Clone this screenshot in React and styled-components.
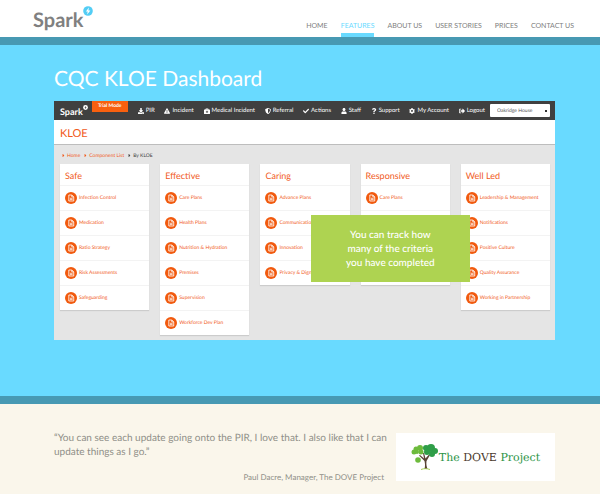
import React from 'react';
import styled, { createGlobalStyle } from 'styled-components';
import {
  FaBriefcaseMedical, FaCheck, FaCog, FaExclamationTriangle, FaDownload,
  FaQuestion, FaShieldAlt, FaSignOutAlt, FaUser, FaCaretRight,
} from 'react-icons/fa';

const Global = createGlobalStyle`
  * { box-sizing: border-box; }
  body { margin: 0; background: #faf6eb; font-family: Lato, "Liberation Sans", sans-serif; text-rendering: geometricPrecision; }
  h1, h2, h3, p, ul, ol, blockquote, figure { margin: 0; padding: 0; }
  ul, ol { list-style: none; }
  a { color: inherit; text-decoration: none; }
`;

const Header = styled.header`
  display: flex;
  justify-content: space-between;
  height: 37px;
  padding: 0 26px 0 33px;
  background: #fff;
`;

const Brand = styled.a`
  display: flex;
  align-items: flex-start;
  padding-top: ${(p) => (p.$small ? 4 : 6)}px;
  color: ${(p) => (p.$small ? '#fff' : '#808080')};
  font-size: ${(p) => (p.$small ? 9 : 20)}px;
  line-height: ${(p) => (p.$small ? 14 : 28)}px;
  font-weight: 700;
`;

const Bolt = styled.svg`
  width: ${(p) => (p.$small ? 5 : 10)}px;
  height: ${(p) => (p.$small ? 5 : 10)}px;
  flex: none;
`;

const MainNav = styled.nav`
  display: flex;
  align-items: flex-end;
  gap: 13px;
`;

const MainLink = styled.a`
  height: 17px;
  font-size: 7px;
  line-height: 13px;
  white-space: nowrap;
  color: ${(p) => (p.$active ? '#69daff' : '#808080')};
  border-bottom: 4px solid ${(p) => (p.$active ? '#69daff' : 'transparent')};
`;

const Hero = styled.main`
  min-height: 367px;
  padding: 20px 45px 56px 54px;
  background: #69daff;
  border: solid #4799b3;
  border-width: 8px 0;
`;

const Title = styled.h1`
  color: #fff;
  font-size: 21px;
  line-height: 28px;
  font-weight: 400;
  margin-bottom: 8px;
`;

const Dashboard = styled.section`
  position: relative;
  min-height: 239px;
  background: #e5e5e5;
`;

const Toolbar = styled.div`
  display: flex;
  align-items: flex-start;
  height: 19px;
  padding: 0 5px 0 6px;
  background: #404040;
  color: #fff;
`;

const Trial = styled.span`
  width: 36px;
  height: 11px;
  margin-left: 4px;
  background: #f8600f;
  font-size: 5px;
  line-height: 11px;
  font-weight: 700;
  text-align: center;
`;

const ToolNav = styled.nav`
  display: flex;
  flex: 1;
  justify-content: space-between;
  padding: 0 5px 0 10px;
`;

const ToolLink = styled.a`
  display: flex;
  align-items: center;
  gap: 2px;
  height: 19px;
  font-size: 6px;
  white-space: nowrap;
  svg { width: 6px; height: 6px; }
`;

const House = styled.select`
  width: 60px;
  height: 13px;
  margin-top: 3px;
  padding: 0 7px;
  appearance: none;
  border: 0;
  border-radius: 1px;
  color: #555;
  font: 5px Lato, sans-serif;
  text-rendering: geometricPrecision;
  background: linear-gradient(#333, #333) right 3px center / 2px 2px no-repeat #fff;
`;

const Heading = styled.h2`
  height: 25px;
  padding-left: 6px;
  background: #fff;
  border-bottom: 1px solid #bdbdbd;
  color: #f15a1c;
  font-size: 11px;
  line-height: 28px;
  font-weight: 400;
`;

const Crumbs = styled.ol`
  display: flex;
  align-items: center;
  gap: 4px;
  height: 19px;
  padding: 2px 8px 0;
  font-size: 5px;
`;

const Crumb = styled.li`
  display: flex;
  align-items: center;
  gap: 2px;
  color: ${(p) => (p.$current ? '#444' : '#f15a1c')};
  svg { width: 3px; height: 5px; }
`;

const Cards = styled.div`
  display: grid;
  grid-template-columns: repeat(5, minmax(0, 1fr));
  align-items: start;
  gap: 11px;
  padding: 0 5px 5px 6px;
`;

const Card = styled.section`
  min-height: 121px;
  background: #fff;
  box-shadow: 0 1px 1px #ccc;
`;

const CardTitle = styled.h3`
  height: 21px;
  padding-left: 5px;
  color: #f15a1c;
  font-size: 9px;
  line-height: 24px;
  font-weight: 400;
`;

const Item = styled.li`
  border-top: 1px solid #f3f3f3;
  &:last-child { border-bottom: ${(p) => (p.$open ? '1px solid #f3f3f3' : '0')}; }
`;

const ItemLink = styled.a`
  display: flex;
  align-items: center;
  gap: 2px;
  height: 24px;
  padding-left: 5px;
  color: #f15a1c;
  font-size: 5px;
  white-space: nowrap;
`;

const Doc = styled.svg`
  width: 12px;
  height: 12px;
  flex: none;
`;

const Callout = styled.p`
  position: absolute;
  top: 114px;
  right: 17%;
  width: 159px;
  padding: 13px 0 12px;
  background: #aed351;
  color: #fff;
  font-size: 10px;
  line-height: 14px;
  font-weight: 500;
  text-align: center;
`;

const Footer = styled.footer`
  display: flex;
  gap: 8px;
  padding: 26px 45px 8px 54px;
  background: #faf6eb;
`;

const Quote = styled.blockquote`
  flex: 1;
  padding-top: 1px;
  color: #8f8f88;
  font-size: 10px;
  line-height: 14px;
`;

const Author = styled.footer`
  padding: 11px 4px 0 0;
  font-size: 8px;
  line-height: 14px;
  text-align: right;
`;

const Sponsor = styled.figure`
  display: flex;
  align-items: center;
  justify-content: center;
  gap: 1px;
  width: 159px;
  height: 48px;
  margin-top: 3px;
  background: #fff;
  color: #2b9446;
  font: 11px "DejaVu Serif", serif;
  white-space: nowrap;
  b { color: #4b3a2c; font-weight: 400; }
`;

const Tree = styled.svg`
  width: 27px;
  height: 27px;
  flex: none;
`;

const Spark = ({ small }) => (
  <Brand href="#" $small={small}>
    Spark
    <Bolt $small={small} viewBox="0 0 10 10" aria-hidden="true">
      <circle cx="5" cy="5" r="4.8" fill={small ? '#fff' : '#52cdf5'} />
      <path d="M5.9 1.5 2.9 5.5h1.8L4.100 8.500 7.400 4.400H5.400z" fill={small ? '#404040' : '#fff'} />
    </Bolt>
  </Brand>
);

const pages = ['HOME', 'FEATURES', 'ABOUT US', 'USER STORIES', 'PRICES', 'CONTACT US'];

const tools = [
  [FaDownload, 'PIR'],
  [FaExclamationTriangle, 'Incident'],
  [FaBriefcaseMedical, 'Medical Incident'],
  [FaShieldAlt, 'Referral'],
  [FaCheck, 'Actions'],
  [FaUser, 'Staff'],
  [FaQuestion, 'Support'],
  [FaCog, 'My Account'],
  [FaSignOutAlt, 'Logout'],
];

const groups = [
  ['Safe', ['Infection Control', 'Medication', 'Ratio Strategy', 'Risk Assessments', 'Safeguarding']],
  ['Effective', ['Care Plans', 'Health Plans', 'Nutrition & Hydration', 'Premises', 'Supervision', 'Workforce Dev Plan']],
  ['Caring', ['Advance Plans', 'Communication', 'Innovation', 'Privacy & Dignity']],
  ['Responsive', ['Care Plans']],
  ['Well Led', ['Leadership & Management', 'Notifications', 'Positive Culture', 'Quality Assurance', 'Working in Partnership']],
];

export default function App() {
  return (
    <>
      <Global />
      <Header>
        <Spark />
        <MainNav>
          {pages.map((p) => <MainLink key={p} href="#" $active={p === 'FEATURES'}>{p}</MainLink>)}
        </MainNav>
      </Header>
      <Hero>
        <Title>CQC KLOE Dashboard</Title>
        <Dashboard>
          <Toolbar>
            <Spark small />
            <Trial>Trial Mode</Trial>
            <ToolNav>
              {tools.map(([Icon, label]) => (
                <ToolLink key={label} href="#"><Icon />{label}</ToolLink>
              ))}
            </ToolNav>
            <House aria-label="House"><option>Oakridge House</option></House>
          </Toolbar>
          <Heading>KLOE</Heading>
          <Crumbs>
            <Crumb><FaCaretRight /><a href="#">Home</a></Crumb>
            <Crumb><FaCaretRight /><a href="#">Component List</a></Crumb>
            <Crumb $current><FaCaretRight />By KLOE</Crumb>
          </Crumbs>
          <Cards>
            {groups.map(([name, items]) => (
              <Card key={name}>
                <CardTitle>{name}</CardTitle>
                <ul>
                  {items.map((item) => (
                    <Item key={item} $open={items.length === 1}>
                      <ItemLink href="#">
                        <Doc viewBox="0 0 22 22" aria-hidden="true">
                          <circle cx="11" cy="11" r="11" fill="#f15a0e" />
                          <path d="M7 5.5h5.5L16 9v7.500H7zM12.500 5.500V9H16M9 11.500h5M9 14h5" fill="none" stroke="#fff" strokeWidth="1.500" />
                        </Doc>
                        {item}
                      </ItemLink>
                    </Item>
                  ))}
                </ul>
              </Card>
            ))}
          </Cards>
          <Callout>You can track how<br />many of the criteria<br />you have completed</Callout>
        </Dashboard>
      </Hero>
      <Footer>
        <Quote>
          <p>“You can see each update going onto the PIR, I love that. I also like that I can update things as I go.”</p>
          <Author>Paul Dacre, Manager, The DOVE Project</Author>
        </Quote>
        <Sponsor>
          <Tree viewBox="0 0 27 27" aria-hidden="true">
            <path d="M13.500 25c.8-3 .6-5.500 0-8L8 11.500l1-.5 4 3.500L12 9l1 0 1.500 5.500 3.500-4 1 .5-3.500 6c-.4 3 0 5.500 1 8z" fill="#594334" />
            <path d="M10 25.500c3-1.200 6-1 9 0" fill="none" stroke="#a9cf58" />
            <g fill="#6dbb3c"><circle cx="3" cy="8" r="2.500" /><circle cx="5" cy="5" r="2.500" /><circle cx="9" cy="4" r="3" /><circle cx="10" cy="8" r="2.500" /><circle cx="6" cy="8" r="2" /><circle cx="7" cy="16" r="2.800" /></g>
            <g fill="#2f9e48"><circle cx="15" cy="4" r="3" /><circle cx="20" cy="4" r="4" /><circle cx="24" cy="7" r="3" /><circle cx="16" cy="8" r="3" /><circle cx="21" cy="10" r="3" /></g>
          </Tree>
          <span>The <b>DOVE</b> Project</span>
        </Sponsor>
      </Footer>
    </>
  );
}
